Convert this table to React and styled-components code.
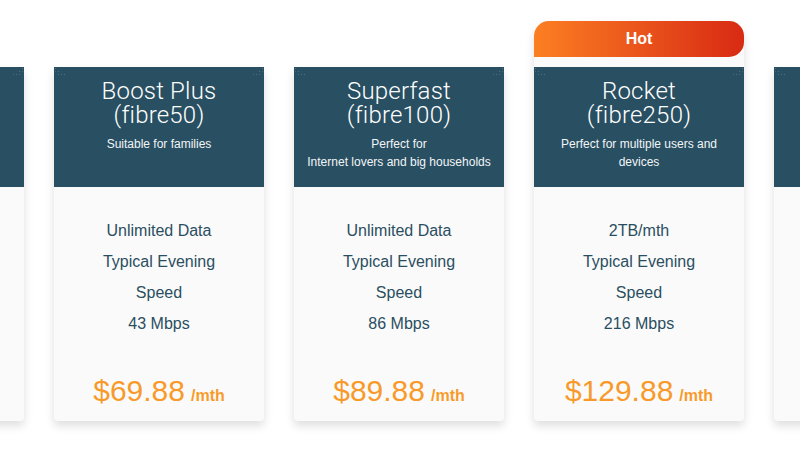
import React from "react";
import styled, { createGlobalStyle } from "styled-components";

const Global = createGlobalStyle`
  html, body { margin: 0; padding: 0; background: #ffffff; }
  body { width: 800px; height: 452px; overflow: hidden; font-family: "Liberation Sans", Arial, sans-serif; }
`;

const Page = styled.div`
  width: 800px;
  height: 452px;
  overflow: hidden;
  padding-top: 21px;
  box-sizing: border-box;
`;

const Track = styled.div`
  display: flex;
  align-items: flex-end;
  gap: 30px;
  margin-left: -186px;
`;

const Card = styled.div`
  flex: 0 0 210px;
  width: 210px;
  display: flex;
  flex-direction: column;
  background: #fafafa;
  border-radius: ${(p) => (p.$hot ? "15px 15px 4px 4px" : "0 0 4px 4px")};
  box-shadow: 0 5px 10px rgba(0, 0, 0, 0.13);
`;

const Badge = styled.div`
  height: 36px;
  margin-bottom: 10px;
  border-radius: 15px 15px 15px 0;
  background: linear-gradient(90deg, #fc7f22 0%, #e8501b 55%, #d82a13 100%);
  color: #ffffff;
  font-weight: 700;
  font-size: 16px;
  display: flex;
  align-items: center;
  justify-content: center;
`;

const Header = styled.div`
  position: relative;
  height: 120px;
  box-sizing: border-box;
  padding: 12px 10px 0;
  background: #294f62;
  color: #ffffff;
  text-align: center;
  &::before,
  &::after {
    content: "";
    position: absolute;
    top: 0;
    width: 12px;
    height: 8px;
    opacity: 0.22;
    background-image: radial-gradient(circle, rgba(255, 255, 255, 0.9) 0.6px, transparent 0.9px);
    background-size: 3px 3px;
  }
  &::before {
    left: 0;
    clip-path: polygon(0 0, 100% 100%, 40% 100%, 0 40%);
  }
  &::after {
    right: 0;
    clip-path: polygon(100% 0, 0 100%, 60% 100%, 100% 40%);
  }
`;

const Title = styled.div`
  font-family: Roboto, "Liberation Sans", sans-serif;
  font-weight: 300;
  font-size: 24px;
  line-height: 24px;
  letter-spacing: 0.2px;
`;

const Subtitle = styled.div`
  margin-top: 8px;
  font-size: 12px;
  line-height: 18px;
  color: #f2f5f7;
`;

const Body = styled.div`
  height: 234px;
  box-sizing: border-box;
  padding-top: 28px;
  display: flex;
  flex-direction: column;
  align-items: center;
`;

const Feature = styled.div`
  max-width: 135px;
  text-align: center;
  font-size: 16px;
  line-height: 31px;
  color: #2a4e61;
`;

const Price = styled.div`
  margin-top: auto;
  margin-bottom: 13px;
  display: flex;
  align-items: baseline;
  gap: 6px;
  color: #f89a2b;
`;

const Amount = styled.span`
  font-size: 30px;
  line-height: 34px;
`;

const Per = styled.span`
  font-size: 16px;
  font-weight: 700;
`;

const plans = [
  {
    title: ["Basic", "(fibre30)"],
    sub: ["Everyday browsing"],
    features: ["Unlimited Data", "Typical Evening Speed", "26 Mbps"],
    price: "$59.88",
  },
  {
    title: ["Boost Plus", "(fibre50)"],
    sub: ["Suitable for families"],
    features: ["Unlimited Data", "Typical Evening Speed", "43 Mbps"],
    price: "$69.88",
  },
  {
    title: ["Superfast", "(fibre100)"],
    sub: ["Perfect for", "Internet lovers and big households"],
    features: ["Unlimited Data", "Typical Evening Speed", "86 Mbps"],
    price: "$89.88",
  },
  {
    title: ["Rocket", "(fibre250)"],
    sub: ["Perfect for multiple users and devices"],
    features: ["2TB/mth", "Typical Evening Speed", "216 Mbps"],
    price: "$129.88",
    hot: true,
  },
  {
    title: ["Ultra", "(fibre1000)"],
    sub: ["For power users"],
    features: ["Unlimited Data", "Typical Evening Speed", "900 Mbps"],
    price: "$149.88",
  },
];

export default function App() {
  return (
    <Page>
      <Global />
      <Track>
        {plans.map((p) => (
          <Card key={p.title[0]} $hot={p.hot}>
            {p.hot && <Badge>Hot</Badge>}
            <Header>
              {p.title.map((t) => (
                <Title key={t}>{t}</Title>
              ))}
              <Subtitle>
                {p.sub.map((s, i) => (
                  <React.Fragment key={s}>
                    {i > 0 && <br />}
                    {s}
                  </React.Fragment>
                ))}
              </Subtitle>
            </Header>
            <Body>
              {p.features.map((f) => (
                <Feature key={f}>{f}</Feature>
              ))}
              <Price>
                <Amount>{p.price}</Amount>
                <Per>/mth</Per>
              </Price>
            </Body>
          </Card>
        ))}
      </Track>
    </Page>
  );
}
